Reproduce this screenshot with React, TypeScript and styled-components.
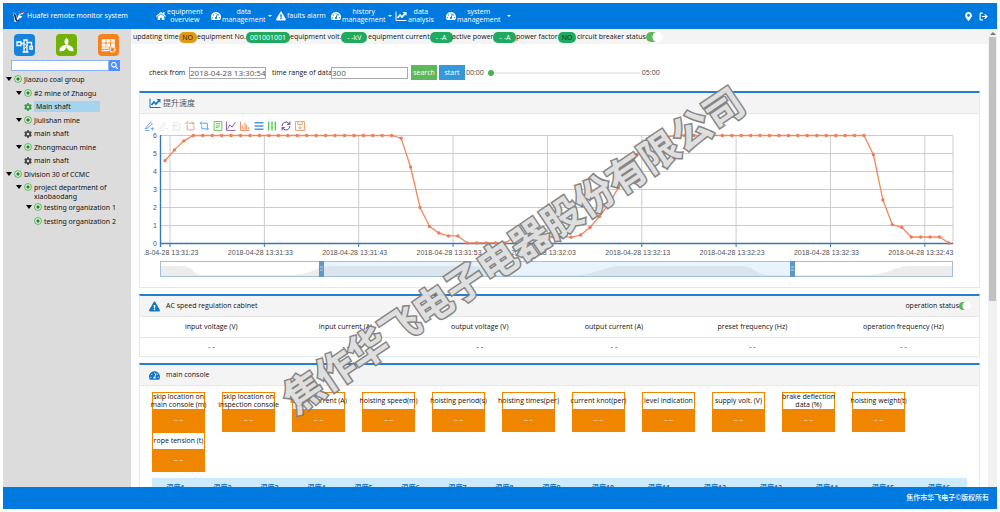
import React from 'react';
import styled, { createGlobalStyle, css } from 'styled-components';
import {
  FaHome,
  FaTachometerAlt,
  FaExclamationTriangle,
  FaMapMarkerAlt,
  FaSearch,
  FaCog,
} from 'react-icons/fa';
import { FiLogOut } from 'react-icons/fi';

const blue = '#007adf';
const orange = '#f08500';

const GlobalStyle = createGlobalStyle`
  * { box-sizing: border-box; }
  body {
    margin: 0;
    background: #fff;
    color: #111;
    font: 7px/8px "Open Sans", "Noto Sans CJK SC", sans-serif;
  }
  button, input { font: inherit; color: inherit; margin: 0; }
  button { padding: 0; border: 0; background: none; }
  svg { display: block; flex: none; }
`;

const Shell = styled.div`
  position: relative;
  display: flex;
  flex-direction: column;
  height: 100vh;
  padding: 3px;
  overflow: hidden;
`;

/* ---------- header ---------- */
const Header = styled.header`
  display: flex;
  align-items: center;
  flex: none;
  height: 26px;
  padding: 0 9px;
  background: ${blue};
  color: #fff;
`;

const Brand = styled.div`
  display: flex;
  align-items: center;
  gap: 2px;
  width: 144px;
  font-family: "Noto Sans", sans-serif;
  white-space: nowrap;
`;

const Nav = styled.nav`
  display: flex;
  align-items: center;
  flex: 1;
`;

const NavItem = styled.a<{ $width: number }>`
  display: flex;
  align-items: center;
  gap: 1px;
  width: ${(p) => p.$width}px;
  color: #fff;
  text-align: center;
  text-decoration: none;
  white-space: pre-line;
`;

const Caret = styled.span<{ $gap?: number }>`
  margin-left: ${(p) => p.$gap ?? 2}px;
  border: 2px solid transparent;
  border-top-color: #fff;
  border-bottom: 0;
`;

const HeaderTools = styled.div`
  display: flex;
  gap: 6px;
`;

/* ---------- body ---------- */
const Body = styled.div`
  display: flex;
  flex: 1;
  min-height: 0;
`;

const Sidebar = styled.aside`
  flex: none;
  width: 128px;
  padding: 5px 0;
  background: #dcdcdc;
  font-family: "Noto Sans", sans-serif;
`;

const Shortcuts = styled.div`
  display: flex;
  justify-content: space-between;
  padding: 0 12px 0 11px;
`;

const Shortcut = styled.button<{ $color: string }>`
  display: grid;
  place-items: center;
  width: 21px;
  height: 22px;
  border-radius: 4px;
  background: ${(p) => p.$color};
`;

const SearchForm = styled.form`
  display: flex;
  height: 11px;
  margin: 4px 11px 0 8px;
`;

const SearchBox = styled.input`
  flex: 1;
  min-width: 0;
  border: 1px solid #8ab4f5;
  background: #fff;
`;

const SearchButton = styled.button`
  display: grid;
  place-items: center;
  width: 11px;
  background: #4d90fe;
  color: #fff;
`;

const Tree = styled.ul`
  margin: 1px 0 0;
  padding: 0;
  list-style: none;
`;

const TreeRow = styled.li<{ $level: number; $leaf?: boolean; $tall?: boolean }>`
  display: flex;
  align-items: ${(p) => (p.$tall ? 'flex-start' : 'center')};
  gap: 2px;
  height: ${(p) => (p.$tall ? 19 : p.$leaf ? 13 : 14)}px;
  padding: ${(p) => (p.$tall ? 2 : 0)}px 0 0 ${(p) => 3 + p.$level * 10}px;
`;

const Twisty = styled.span<{ $hidden?: boolean }>`
  flex: none;
  margin: ${(p) => (p.$hidden ? 0 : 2)}px 0 2px;
  border: 3px solid transparent;
  border-top: 4px solid #000;
  border-bottom: 0;
  visibility: ${(p) => (p.$hidden ? 'hidden' : 'visible')};
`;

const TreeLabel = styled.span<{ $selected?: boolean }>`
  line-height: 9px;
  ${(p) =>
    p.$selected &&
    css`
      width: 66px;
      padding: 1px 2px;
      background: #a6d4ee;
    `}
`;

const Main = styled.main`
  flex: 1;
  min-width: 0;
  overflow: hidden;
`;

const StatusBar = styled.div`
  display: flex;
  align-items: center;
  height: 15px;
  padding: 1px 2px 0;
  background: #f4f4f4;
  white-space: nowrap;
`;

const StatusItem = styled.div<{ $width: number }>`
  display: flex;
  align-items: center;
  justify-content: space-between;
  width: ${(p) => p.$width}px;
  margin-right: 1px;
`;

const Pill = styled.span<{ $width: number; $amber?: boolean; $dark?: boolean }>`
  flex: none;
  width: ${(p) => p.$width}px;
  border-radius: 5px;
  background: ${(p) => (p.$amber ? '#e09b12' : '#1faa60')};
  color: ${(p) => (p.$amber || p.$dark ? '#222' : '#fff')};
  line-height: 11px;
  text-align: center;
`;

const Toggle = styled.input<{ $small?: boolean }>`
  appearance: none;
  flex: none;
  width: ${(p) => (p.$small ? 12 : 17)}px;
  height: ${(p) => (p.$small ? 8 : 10)}px;
  border-radius: 5px;
  background: ${(p) =>
    p.$small
      ? 'radial-gradient(circle at 8px 50%, #fff 4px, #5cb85c 5px)'
      : 'radial-gradient(circle at 12px 50%, #fff 5px, #5cb85c 6px)'};
`;

const Controls = styled.form`
  display: flex;
  align-items: center;
  height: 15px;
  margin: 21px 0 0 18px;
`;

const FieldLabel = styled.label<{ $width: number; $indent?: boolean }>`
  width: ${(p) => p.$width}px;
  padding-left: ${(p) => (p.$indent ? 6 : 0)}px;
  white-space: nowrap;
`;

const Field = styled.input`
  width: 77px;
  height: 12px;
  padding: 0;
  border: 1px solid #aaa;
  background: #fff;
  color: #555;
  font-size: 8px;
`;

const Action = styled.button<{ $color: string; $gap: number }>`
  width: 26px;
  height: 15px;
  margin-left: ${(p) => p.$gap}px;
  background: ${(p) => p.$color};
  color: #fff;
`;

const Timeline = styled.input`
  appearance: none;
  width: 152px;
  height: 7px;
  margin: 0 1px 0 4px;
  background: linear-gradient(#e9e9e9, #e9e9e9) center / 100% 2px no-repeat;
  &::-webkit-slider-thumb {
    appearance: none;
    width: 6px;
    height: 6px;
    border-radius: 50%;
    background: #4caf50;
  }
`;

const Time = styled.span`
  margin-left: 1px;
  color: #444;
`;

/* ---------- cards ---------- */
const Card = styled.section<{ $gap: number }>`
  margin: ${(p) => p.$gap}px 8px 0;
  border: 1px solid #e3e8ee;
  border-top: 2px solid #2380d0;
`;

const CardHead = styled.h2`
  display: flex;
  align-items: center;
  gap: 6px;
  height: 21px;
  margin: 0;
  padding: 0 8px 0 9px;
  border-bottom: 1px solid #e6e6e6;
  background: #f4f4f4;
  font-size: 7px;
  font-weight: 400;
  line-height: 8px;
  & > svg { color: #1275c5; }
`;

const ChartTitle = styled.span`
  margin-left: -4px;
  color: #555;
  font-size: 8px;
`;

const Operation = styled.label`
  display: flex;
  align-items: center;
  margin-left: auto;
`;

const ChartBody = styled.div`
  padding: 7px 3px 0 4px;
`;

const Toolbox = styled.div`
  display: flex;
  justify-content: space-between;
  width: 161px;
  padding-bottom: 1px;
`;

const Chart = styled.svg`
  width: 100%;
  height: auto;
  text { font: 7px "Liberation Sans", sans-serif; fill: #555; }
`;

const DataTable = styled.table`
  width: 100%;
  border-collapse: collapse;
  table-layout: fixed;
  text-align: center;
  th { height: 20px; padding: 0; font-weight: 400; }
  td { height: 19px; padding: 0; border-top: 1px solid #e6e6e6; }
`;

const Tiles = styled.div`
  display: flex;
  flex-wrap: wrap;
  column-gap: 17px;
  padding: 6px 12px;
`;

const Tile = styled.div`
  width: 53px;
  border: 1px solid ${orange};
`;

const TileName = styled.div`
  display: flex;
  align-items: center;
  justify-content: center;
  height: 16px;
  text-align: center;
  white-space: pre;
`;

const TileValue = styled.div`
  background: ${orange};
  color: #fff;
  line-height: 22px;
  text-align: center;
`;

const Temperatures = styled.table`
  width: calc(100% - 24px);
  margin: 0 12px;
  border-collapse: collapse;
  table-layout: fixed;
  background: #cbeafc;
  color: #0f6fc0;
  th { height: 20px; padding: 0; font-weight: 700; }
`;

const ScrollTrack = styled.div`
  flex: none;
  width: 9px;
  padding-top: 3px;
  background: #f1f1f1;
`;

const ScrollThumb = styled.div`
  width: 7px;
  height: 58%;
  margin: 0 auto;
  background: #c1c1c1;
`;

const ScrollUp = styled.div`
  width: 6px;
  margin: 0 auto 2px;
  border: 3px solid transparent;
  border-top: 0;
  border-bottom-color: #777;
`;

const Footer = styled.footer`
  flex: none;
  padding: 0 8px;
  background: ${blue};
  color: #fff;
  font-weight: 500;
  line-height: 22px;
  text-align: right;
`;

const Watermark = styled.div`
  position: absolute;
  top: 248px;
  left: 512px;
  color: #dedede;
  font: 700 39px/40px "Noto Sans CJK SC", sans-serif;
  opacity: 0.95;
  white-space: nowrap;
  pointer-events: none;
  transform: translate(-50%, -50%) rotate(-34deg);
  -webkit-text-stroke: 3px #808080;
  paint-order: stroke fill;
`;

/* ---------- drawings ---------- */
const Logo = () => (
  <svg width="13" height="13" viewBox="0 0 24 24">
    <path d="M1 5c4 0 6 1 7 5l1 6 5-10 9-3-3 5h-4l-1 3h4l-3 4h-3l-3 6-5 1C4 19 4 9 1 5z" fill="#fff" />
    <path d="M1 5c4 2 3 13 7 16 2 1 5 0 6-3-2 2-4 1-5-1C8 12 7 5 1 5z" fill="#16305e" />
    <path d="M13 8l2-3 9-3-3 3z" fill="#d83a2e" />
  </svg>
);

const Crane = () => (
  <svg width="17" height="17" viewBox="0 0 34 34" fill="none" stroke="#fff" strokeWidth="2.6">
    <path d="M2 10h8v7H2zM10 13h6M16 30V6h6v24M22 11h9v8M28 19h5v5h-5zM13 30h12" />
    <path d="M16 13l6 5-6 6" strokeWidth="1.8" />
  </svg>
);

const Fan = () => (
  <svg width="17" height="17" viewBox="0 0 34 34" fill="#fff">
    <path d="M17 2c5 3 5 9 2 13l-2 2-2-2c-3-4-3-10 2-13z" />
    <path d="M16 17l4-1c6 1 12 5 11 12-7 2-12-2-14-8z" />
    <path d="M18 17l-4-1C8 17 2 21 3 28c7 2 12-2 14-8z" />
  </svg>
);

const Panel = () => (
  <svg width="17" height="17" viewBox="0 0 34 34" fill="none" stroke="#fff">
    <path d="M4 5h25v14H4z" fill="#fff" />
    <path d="M12 5v14M21 5v14M4 12h25" stroke="#f58220" strokeWidth="1.6" />
    <path d="M3 22h15M3 27h15" strokeWidth="3" />
    <circle cx="25" cy="25" r="5" strokeWidth="3" strokeDasharray="3 1.2" fill="#f58220" />
  </svg>
);

const Node = () => (
  <svg width="8" height="8" viewBox="0 0 16 16">
    <circle cx="8" cy="8" r="6.8" fill="#eef7ee" stroke="#35a035" strokeWidth="1.6" />
    <circle cx="8" cy="8" r="3.4" fill="#25892a" />
  </svg>
);

const Trend = ({ size }: { size: number }) => (
  <svg width={size} height={size} viewBox="0 0 24 24" fill="none" stroke="currentColor" strokeWidth="2.4">
    <path d="M2 3v18h21" strokeWidth="2" />
    <path d="M5 16l5-6 4 4 7-8" strokeWidth="3.4" />
    <path d="M15 4h8v8z" fill="currentColor" stroke="none" />
  </svg>
);

const TOOLS: { color: string; path: string; label: string; bold?: boolean }[] = [
  { label: 'Draw mark', color: '#5a9bea', path: 'M2 14L12 2l3 3L6 13l-4 1zM2 17h8M12 14h6M15 11v6' },
  { label: 'Undo mark', color: '#e6e6e6', path: 'M2 14L12 2l3 3L6 13l-4 1zM2 17h8M12 14h6' },
  { label: 'Clear marks', color: '#e2e2e2', path: 'M5 2h7l4 4v10H5zM2 8h9M8 5l3 3-3 3' },
  { label: 'Zoom', color: '#f0995a', path: 'M4 0v4M0 4h4M6 4h9v3M4 6v10h12V8M13 1v3h4' },
  { label: 'Reset zoom', color: '#4a9bea', path: 'M5 1L2 4l3 3M2 4h13v8M5 8v6h12M14 11l3 3-3 3' },
  { label: 'Data view', color: '#50c050', path: 'M2 1h14v16H2zM5 5h8M5 9h8M5 12h5' },
  { label: 'Line chart', color: '#8a4fb0', path: 'M1 1v16h16M3 14l4-7 4 4 6-9' },
  { label: 'Bar chart', color: '#ef7d4a', path: 'M1 1v16h16M5 15V8M9 15V3M12 15V7M15 15v-4' },
  { label: 'Stack', color: '#4a94e8', path: 'M1 3h16M1 9h16M1 15h16', bold: true },
  { label: 'Tile', color: '#57cf57', path: 'M3 1v16M9 1v16M15 1v16', bold: true },
  { label: 'Restore', color: '#5b2590', path: 'M2 9a7 7 0 0 1 12-5l2 2M16 1v5h-5M16 9a7 7 0 0 1-12 5l-2-2M2 17v-5h5' },
  { label: 'Save image', color: '#ef935a', path: 'M1 1h16v16H1zM5 1v5h8V1M9 8v6M6 11l3 3 3-3' },
];

const flat = (v: number, n: number) => Array<number>(n).fill(v);
const SPEED = [
  4.6, 5.2, 5.7,
  ...flat(6, 22),
  5.85, 4.25, 2, 0.95, 0.58, 0.42, 0.42,
  ...flat(0.03, 5),
  0.35,
  ...flat(0.37, 5),
  0.35, 0.47, 0.9, 1.5, 2.2, 3.1, 4.05, 4.95, 5.4, 5.75, 5.9,
  ...flat(6, 21),
  4.93, 2.42, 1.05, 0.9,
  ...flat(0.36, 4),
  0.03,
];
const STEP = 784 / (SPEED.length - 1);
const px = (i: number) => 21 + i * STEP;
const py = (v: number) => 112 - v * 18;
const TICKS = ['31:23', '31:33', '31:43', '31:53', '32:03', '32:13', '32:23', '32:33', '32:43'];

const SpeedChart = () => (
  <Chart viewBox="0 0 832 155">
    {[0, 1, 2, 3, 4, 5, 6].map((v) => (
      <g key={v}>
        <path d={`M16 ${py(v) - 0.5}H809`} stroke="#ccc" />
        <text x="13" y={py(v) + 2} textAnchor="end">{v}</text>
      </g>
    ))}
    {TICKS.map((t, i) => {
      const x = 26 + i * 94.35;
      return (
        <g key={t}>
          <path d={`M${x} 4V112`} stroke="#ccc" />
          <path d={`M${x} 112v3`} stroke="#3a78b5" />
          <text x={x - 4} y="123" textAnchor="middle">{`2018-04-28 13:${t}`}</text>
        </g>
      );
    })}
    <path d="M809 4V112" stroke="#ccc" />
    <path d="M16.5 3V115M16 111.5H809" stroke="#3a78b5" strokeWidth="1.4" fill="none" />
    <polyline
      points={SPEED.map((v, i) => `${px(i)},${py(v) - 0.5}`).join(' ')}
      fill="none"
      stroke="#f4875c"
      strokeWidth="1.3"
    />
    {SPEED.map((v, i) => (
      <circle key={i} cx={px(i)} cy={py(v) - 0.5} r="1.7" fill="#ee7c5c" />
    ))}
    <path d="M17 144V134H40C50 135 48 143 60 143H145C172 143 168 134 190 134H330C345 135 340 143 355 143H435C450 142 465 134 475 134H600C612 136 612 143 628 143H725C750 142 745 134 770 134H809V144z" fill="#ececec" />
    <rect x="177" y="129" width="471" height="15" fill="rgba(150,200,240,.22)" />
    <rect x="16.5" y="129.5" width="792" height="15" fill="none" stroke="#a3bfd8" />
    <rect x="175" y="129" width="5" height="16" fill="#5f97c8" />
    <rect x="646" y="129" width="5" height="16" fill="#5f97c8" />
    <path d="M176 135h3M176 138h3M647 135h3M647 138h3" stroke="#fff" strokeWidth=".6" />
  </Chart>
);

/* ---------- data ---------- */
const TREE: { text: string; level: number; leaf?: boolean; selected?: boolean; end?: boolean; tall?: boolean }[] = [
  { text: 'Jiaozuo coal group', level: 0 },
  { text: '#2 mine of Zhaogu', level: 1 },
  { text: 'Main shaft', level: 1, leaf: true, selected: true },
  { text: 'Jiulishan mine', level: 1 },
  { text: 'main shaft', level: 1, leaf: true },
  { text: 'Zhongmacun mine', level: 1 },
  { text: 'main shaft', level: 1, leaf: true },
  { text: 'Division 30 of CCMC', level: 0 },
  { text: 'project department of xiaobaodang', level: 1, tall: true },
  { text: 'testing organization 1', level: 2 },
  { text: 'testing organization 2', level: 2, end: true },
];

const CABINET: [string, string][] = [
  ['input voltage (V)', '17%'],
  ['input current (A)', '15%'],
  ['output voltage (V)', '17%'],
  ['output current (A)', '15%'],
  ['preset frequency (Hz)', '18%'],
  ['operation frequency (Hz)', '18%'],
];

const TILES = [
  'skip location on\nmain console (m)',
  'skip location on\ninspection console',
  'motor current (A)',
  'hoisting speed(m)',
  'hoisting period(s)',
  'hoisting times(per)',
  'current knot(per)',
  'level indication',
  'supply volt. (V)',
  'brake deflection\ndata (%)',
  'hoisting weight(t)',
  'rope tension (t)',
];

export default function App() {
  return (
    <Shell>
      <GlobalStyle />
      <Header>
        <Brand><Logo />Huafei remote monitor system</Brand>
        <Nav>
          <NavItem href="#" $width={55}><FaHome size={10} />{'equipment\noverview'}</NavItem>
          <NavItem href="#" $width={65}><FaTachometerAlt size={10} />{'data\nmanagement'}<Caret /></NavItem>
          <NavItem href="#" $width={55}><FaExclamationTriangle size={10} />faults alarm</NavItem>
          <NavItem href="#" $width={64}><FaTachometerAlt size={10} />{'history\nmanagement'}<Caret /></NavItem>
          <NavItem href="#" $width={51}><Trend size={12} />{'data\nanalysis'}</NavItem>
          <NavItem href="#" $width={70}><FaTachometerAlt size={10} />{'system\nmanagement'}<Caret $gap={6} /></NavItem>
        </Nav>
        <HeaderTools>
          <FaMapMarkerAlt size={9} />
          <FiLogOut size={9} strokeWidth={3} />
        </HeaderTools>
      </Header>

      <Body>
        <Sidebar>
          <Shortcuts>
            <Shortcut $color="#1683dc" aria-label="Hoists"><Crane /></Shortcut>
            <Shortcut $color="#72b108" aria-label="Fans"><Fan /></Shortcut>
            <Shortcut $color="#f58220" aria-label="Panels"><Panel /></Shortcut>
          </Shortcuts>
          <SearchForm>
            <SearchBox aria-label="Search tree" />
            <SearchButton type="button" aria-label="Search"><FaSearch size={7} /></SearchButton>
          </SearchForm>
          <Tree>
            {TREE.map((n, i) => (
              <TreeRow key={i} $level={n.level} $leaf={n.leaf} $tall={n.tall}>
                <Twisty $hidden={n.leaf || n.end} />
                {n.leaf ? <FaCog size={8} color={n.selected ? '#2c9a44' : '#444'} /> : <Node />}
                <TreeLabel $selected={n.selected}>{n.text}</TreeLabel>
              </TreeRow>
            ))}
          </Tree>
        </Sidebar>

        <Main>
          <StatusBar>
            <StatusItem $width={63}>updating time<Pill $width={18} $amber>NO</Pill></StatusItem>
            <StatusItem $width={92}>equipment No.<Pill $width={44}>001001001</Pill></StatusItem>
            <StatusItem $width={77}>equipment volt.<Pill $width={26}>- -kV</Pill></StatusItem>
            <StatusItem $width={83}>equipment current<Pill $width={23}>- -A</Pill></StatusItem>
            <StatusItem $width={63}>active power<Pill $width={23}>- -A</Pill></StatusItem>
            <StatusItem $width={60}>power factor<Pill $width={18} $dark>NO</Pill></StatusItem>
            <StatusItem as="label" $width={81}>circuit breaker status<Toggle type="checkbox" defaultChecked /></StatusItem>
          </StatusBar>

          <Controls>
            <FieldLabel htmlFor="from" $width={40}>check from</FieldLabel>
            <Field id="from" defaultValue="2018-04-28 13:30:54" />
            <FieldLabel htmlFor="range" $width={65} $indent>time range of data</FieldLabel>
            <Field id="range" defaultValue="300" />
            <Action type="button" $color="#5cb85c" $gap={3}>search</Action>
            <Action type="button" $color="#3498db" $gap={2}>start</Action>
            <Time>00:00</Time>
            <Timeline type="range" min={0} max={300} defaultValue={0} aria-label="Playback position" />
            <Time>05:00</Time>
          </Controls>

          <Card $gap={11}>
            <CardHead><Trend size={12} /><ChartTitle>提升速度</ChartTitle></CardHead>
            <ChartBody>
              <Toolbox>
                {TOOLS.map((t) => (
                  <button key={t.label} aria-label={t.label}>
                    <svg width="10" height="10" viewBox="0 0 18 18" fill="none" stroke={t.color} strokeWidth={t.bold ? 2.6 : 1.6}>
                      <path d={t.path} />
                    </svg>
                  </button>
                ))}
              </Toolbox>
              <SpeedChart />
            </ChartBody>
          </Card>

          <Card $gap={6}>
            <CardHead>
              <FaExclamationTriangle size={11} />
              AC speed regulation cabinet
              <Operation>operation status<Toggle type="checkbox" $small defaultChecked /></Operation>
            </CardHead>
            <DataTable>
              <colgroup>{CABINET.map(([n, w]) => <col key={n} width={w} />)}</colgroup>
              <thead><tr>{CABINET.map(([n]) => <th key={n}>{n}</th>)}</tr></thead>
              <tbody><tr>{CABINET.map(([n]) => <td key={n}>- -</td>)}</tr></tbody>
            </DataTable>
          </Card>

          <Card $gap={6}>
            <CardHead><FaTachometerAlt size={11} />main console</CardHead>
            <Tiles>
              {TILES.map((t) => (
                <Tile key={t}>
                  <TileName>{t}</TileName>
                  <TileValue>– –</TileValue>
                </Tile>
              ))}
            </Tiles>
            <Temperatures>
              <colgroup>
                {Array.from({ length: 16 }, (_, i) => <col key={i} width={i < 9 ? '47' : '56'} />)}
              </colgroup>
              <thead>
                <tr>{Array.from({ length: 16 }, (_, i) => <th key={i}>温度{i + 1}</th>)}</tr>
              </thead>
            </Temperatures>
          </Card>
        </Main>

        <ScrollTrack>
          <ScrollUp />
          <ScrollThumb />
        </ScrollTrack>
      </Body>
      <Footer>焦作市华飞电子©版权所有</Footer>
      <Watermark>焦作华飞电子电器股份有限公司</Watermark>
    </Shell>
  );
}
